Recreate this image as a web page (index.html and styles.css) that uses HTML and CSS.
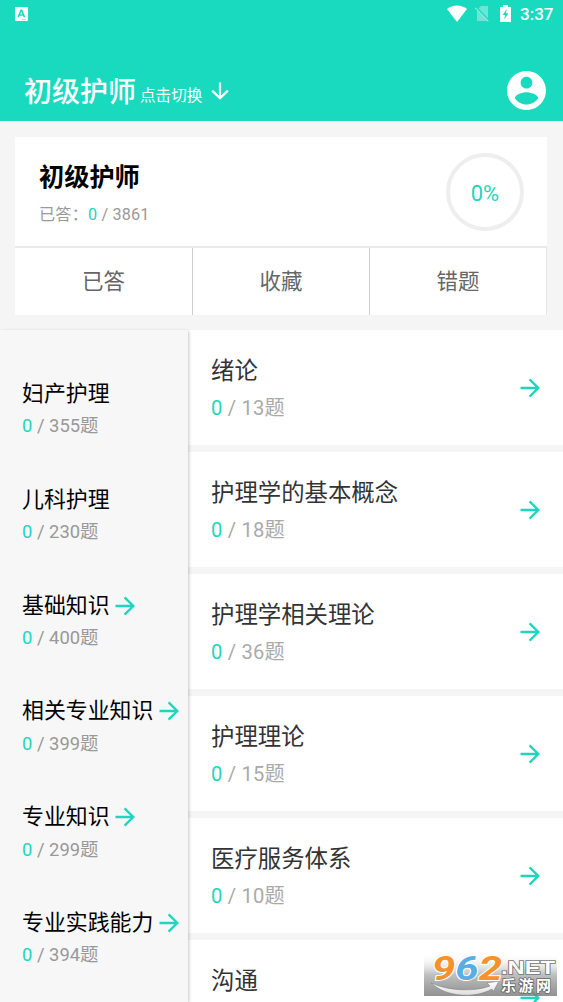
FILE: index.html
```html
<!DOCTYPE html>
<html lang="zh-CN">
<head>
<meta charset="utf-8">
<title>初级护师</title>
<link rel="stylesheet" href="styles.css">
</head>
<body>
<svg class="defs" width="0" height="0">
  <symbol id="arrow" viewBox="0 0 20 20"><path d="M0.5 10H18M9.6 1.3L18.3 10L9.6 18.7" fill="none" stroke="currentColor" stroke-width="2.4"/></symbol>
</svg>
<div class="screen">
  <header class="header">
    <div class="status">
      <svg class="ime" viewBox="0 0 13 14"><rect width="13" height="14" rx="1" fill="#fff"/><path d="M3.2 10.2L6 3.3H6.7L9.5 10.2M4.3 8H8.4" fill="none" stroke="#19dabf" stroke-width="1.6"/><path d="M7 12.5h4" stroke="#9eeee2"/></svg>
      <div class="status-right">
        <svg class="wifi" viewBox="0 0 20 17"><path d="M10 17L0 4C5.500 -.7 14.500 -.7 20 4Z" fill="#fff"/></svg>
        <svg class="sim" viewBox="0 0 15 17"><path d="M2 5L6 1H13V16H2Z" fill="#fff" opacity=".35"/><path d="M.5 2L14 16" stroke="#19dabf" stroke-width="2.4"/><path d="M.3 2.8L13.3 16.3" stroke="#fff" stroke-width="1.2" opacity=".5"/></svg>
        <svg class="battery" viewBox="0 0 11 17"><path d="M0 2H3V0H8V2H11V17H0Z" fill="#fff"/><path d="M6.7 4L2.8 10H5L4.3 14.5L8.4 8.300H6Z" fill="#19dabf"/></svg>
        <span class="clock">3:37</span>
      </div>
    </div>
    <div class="bar">
      <div class="switcher">
        <span class="exam">初级护师</span>
        <span class="hint">点击切换</span>
        <svg class="down" viewBox="0 0 18 18"><path d="M9 .5V16M1.200 8.600L9 16.300L16.800 8.600" fill="none" stroke="#fff" stroke-width="2.2"/></svg>
      </div>
      <svg class="avatar" viewBox="2 2 20 20"><path fill="#fff" d="M12 2C6.48 2 2 6.48 2 12s4.480 10 10 10 10-4.480 10-10S17.520 2 12 2zm0 3c1.660 0 3 1.340 3 3s-1.340 3-3 3-3-1.340-3-3 1.340-3 3-3zm0 14.200c-2.500 0-4.710-1.280-6-3.220.030-1.990 4-3.080 6-3.080 1.990 0 5.970 1.090 6 3.080-1.290 1.940-3.500 3.220-6 3.220z"/></svg>
    </div>
  </header>

  <section class="summary">
    <div class="summary-top">
      <div>
        <h1 class="summary-title">初级护师</h1>
        <p class="summary-count">已答：<b>0</b> / 3861</p>
      </div>
      <div class="ring">0%</div>
    </div>
    <nav class="tabs"><span class="tab">已答</span><span class="tab">收藏</span><span class="tab">错题</span></nav>
  </section>

  <main class="content">
    <aside class="subjects">
      <div class="subject"><div class="subject-name">妇产护理</div><div class="subject-count"><b>0</b> / 355题</div></div>
      <div class="subject"><div class="subject-name">儿科护理</div><div class="subject-count"><b>0</b> / 230题</div></div>
      <div class="subject"><div class="subject-name">基础知识<svg class="arrow"><use href="#arrow"/></svg></div><div class="subject-count"><b>0</b> / 400题</div></div>
      <div class="subject"><div class="subject-name">相关专业知识<svg class="arrow"><use href="#arrow"/></svg></div><div class="subject-count"><b>0</b> / 399题</div></div>
      <div class="subject"><div class="subject-name">专业知识<svg class="arrow"><use href="#arrow"/></svg></div><div class="subject-count"><b>0</b> / 299题</div></div>
      <div class="subject"><div class="subject-name">专业实践能力<svg class="arrow"><use href="#arrow"/></svg></div><div class="subject-count"><b>0</b> / 394题</div></div>
    </aside>
    <div class="chapters">
      <div class="chapter"><div><div class="chapter-name">绪论</div><div class="chapter-count"><b>0</b> / 13题</div></div><svg class="arrow"><use href="#arrow"/></svg></div>
      <div class="chapter"><div><div class="chapter-name">护理学的基本概念</div><div class="chapter-count"><b>0</b> / 18题</div></div><svg class="arrow"><use href="#arrow"/></svg></div>
      <div class="chapter"><div><div class="chapter-name">护理学相关理论</div><div class="chapter-count"><b>0</b> / 36题</div></div><svg class="arrow"><use href="#arrow"/></svg></div>
      <div class="chapter"><div><div class="chapter-name">护理理论</div><div class="chapter-count"><b>0</b> / 15题</div></div><svg class="arrow"><use href="#arrow"/></svg></div>
      <div class="chapter"><div><div class="chapter-name">医疗服务体系</div><div class="chapter-count"><b>0</b> / 10题</div></div><svg class="arrow"><use href="#arrow"/></svg></div>
      <div class="chapter"><div><div class="chapter-name">沟通</div></div><svg class="arrow"><use href="#arrow"/></svg></div>
    </div>
  </main>

  <svg class="watermark" viewBox="0 0 133 43">
    <defs>
      <linearGradient id="shade" x2="0" y2="1"><stop offset="0" stop-color="#fff" stop-opacity="0"/><stop offset=".5" stop-color="#b9b9b9" stop-opacity=".9"/><stop offset="1" stop-color="#777" stop-opacity=".8"/></linearGradient>
      <linearGradient id="swoosh" x2="0" y2="1"><stop offset="0" stop-color="#fff"/><stop offset="1" stop-color="#ddd"/></linearGradient>
    </defs>
    <rect width="133" height="43" fill="url(#shade)"/>
    <path d="M7 30C25 38 50 39 66 33L63 30L75 28L69 39L68 36C50 46 22 44 7 30Z" fill="url(#swoosh)" stroke="#777" stroke-width=".5"/>
    <text class="wm-num" x="8" y="27" textLength="70" lengthAdjust="spacingAndGlyphs"><tspan class="orange">9</tspan><tspan class="blue">6</tspan><tspan class="orange">2</tspan></text>
    <text class="wm-net" x="77" y="21" textLength="54" lengthAdjust="spacingAndGlyphs">.NET</text>
    <text class="wm-cn" x="77" y="38" textLength="50">乐游网</text>
  </svg>
</div>
</body>
</html>
```
FILE: styles.css
```css
* { box-sizing: border-box; margin: 0; padding: 0; }
body { font-family: Roboto, "Noto Sans CJK SC", sans-serif; background: #f5f5f5; }
b { font-weight: 400; color: #1fd6bd; }
svg { display: block; flex: none; }
.defs { position: absolute; }
.screen { position: relative; width: 563px; height: 1002px; overflow: hidden; background: #f5f5f5; }

.header { height: 121px; background: #19dabf; color: #fff; }
.status { height: 30px; padding: 0 10px 0 15px; display: flex; justify-content: space-between; }
.ime { width: 13px; height: 14px; margin-top: 7px; }
.status-right { display: flex; }
.wifi { width: 20px; height: 17px; margin-top: 5px; }
.sim { width: 15px; height: 17px; margin: 5px 0 0 8px; }
.battery { width: 11px; height: 17px; margin: 5px 0 0 10px; }
.clock { width: 33px; margin-left: 9px; font-size: 17px; line-height: 29px; font-weight: 500; white-space: nowrap; }
.bar { height: 91px; padding: 0 17px 0 24px; display: flex; justify-content: space-between; }
.switcher { display: flex; }
.exam { width: 112px; font-size: 28px; line-height: 40px; font-weight: 500; margin-top: 43px; white-space: nowrap; }
.hint { width: 63px; font-size: 15.600px; line-height: 24px; margin: 54px 0 0 4px; white-space: nowrap; }
.down { width: 18px; height: 18px; margin: 52px 0 0 8px; }
.avatar { width: 39px; height: 39px; margin-top: 41px; }

.summary { width: 532px; margin: 16px 0 0 15px; background: #fff; }
.summary-top { height: 109px; padding: 16px 23px 0 24px; display: flex; justify-content: space-between; }
.summary-title { font-size: 25.200px; line-height: 36px; font-weight: 700; margin-top: 7px; color: #000; }
.summary-count { font-size: 16.200px; line-height: 24px; margin-top: 7px; color: #999; letter-spacing: .15px; }
.ring { width: 78px; height: 78px; border: 4px solid #eee; border-radius: 50%; text-align: center; font-size: 22px; line-height: 74px; color: #1fd6bd; }
.tabs { height: 69px; display: grid; grid-template-columns: repeat(3, 1fr); border-top: 2px solid #eaeaea; border-right: 1px solid #e6e6e6; }
.tab { text-align: center; font-size: 21.500px; line-height: 67px; color: #666; }
.tab + .tab { border-left: 1px solid #d0d0d0; }

.content { display: flex; margin-top: 15px; height: 672px; }
.subjects { width: 188px; padding: 48px 0 0 22px; background: #f7f7f7; box-shadow: 1px 1px 3px rgba(0,0,0,.22); z-index: 1; }
.subject { height: 105.800px; }
.subject-name { display: flex; align-items: center; font-size: 21.900px; line-height: 32px; color: #000; white-space: nowrap; }
.subject-name .arrow { margin-left: 5.500px; }
.subject-count { font-size: 18.400px; line-height: 26px; margin-top: 3.400px; color: #999; }
.arrow { width: 20px; height: 20px; color: #20d5bd; }
.chapters { flex: 1; display: flex; flex-direction: column; gap: 7.600px; }
.chapter { height: 114.500px; flex: none; padding: 24px 23px 0 23px; background: #fff; display: flex; justify-content: space-between; }
.chapter-name { font-size: 23.400px; line-height: 34px; color: #333; }
.chapter-count { font-size: 20.200px; line-height: 28px; margin-top: 6px; color: #aaa; letter-spacing: .2px; }
.chapter .arrow { margin-top: 24px; }

.watermark { position: absolute; left: 424px; top: 953px; width: 133px; height: 43px; z-index: 2; }
.wm-num { font: italic 700 34px Roboto, sans-serif; stroke: #fff; stroke-width: 2px; paint-order: stroke; }
.orange { fill: #f7912b; }
.blue { fill: #5aaee4; }
.wm-net { font: 700 18px "Liberation Sans", sans-serif; fill: #fff; stroke: #777; stroke-width: 1.500px; paint-order: stroke; }
.wm-cn { font: 700 15px "Noto Sans CJK SC", sans-serif; fill: #fff; stroke: #666; stroke-width: 1.500px; paint-order: stroke; }
```
